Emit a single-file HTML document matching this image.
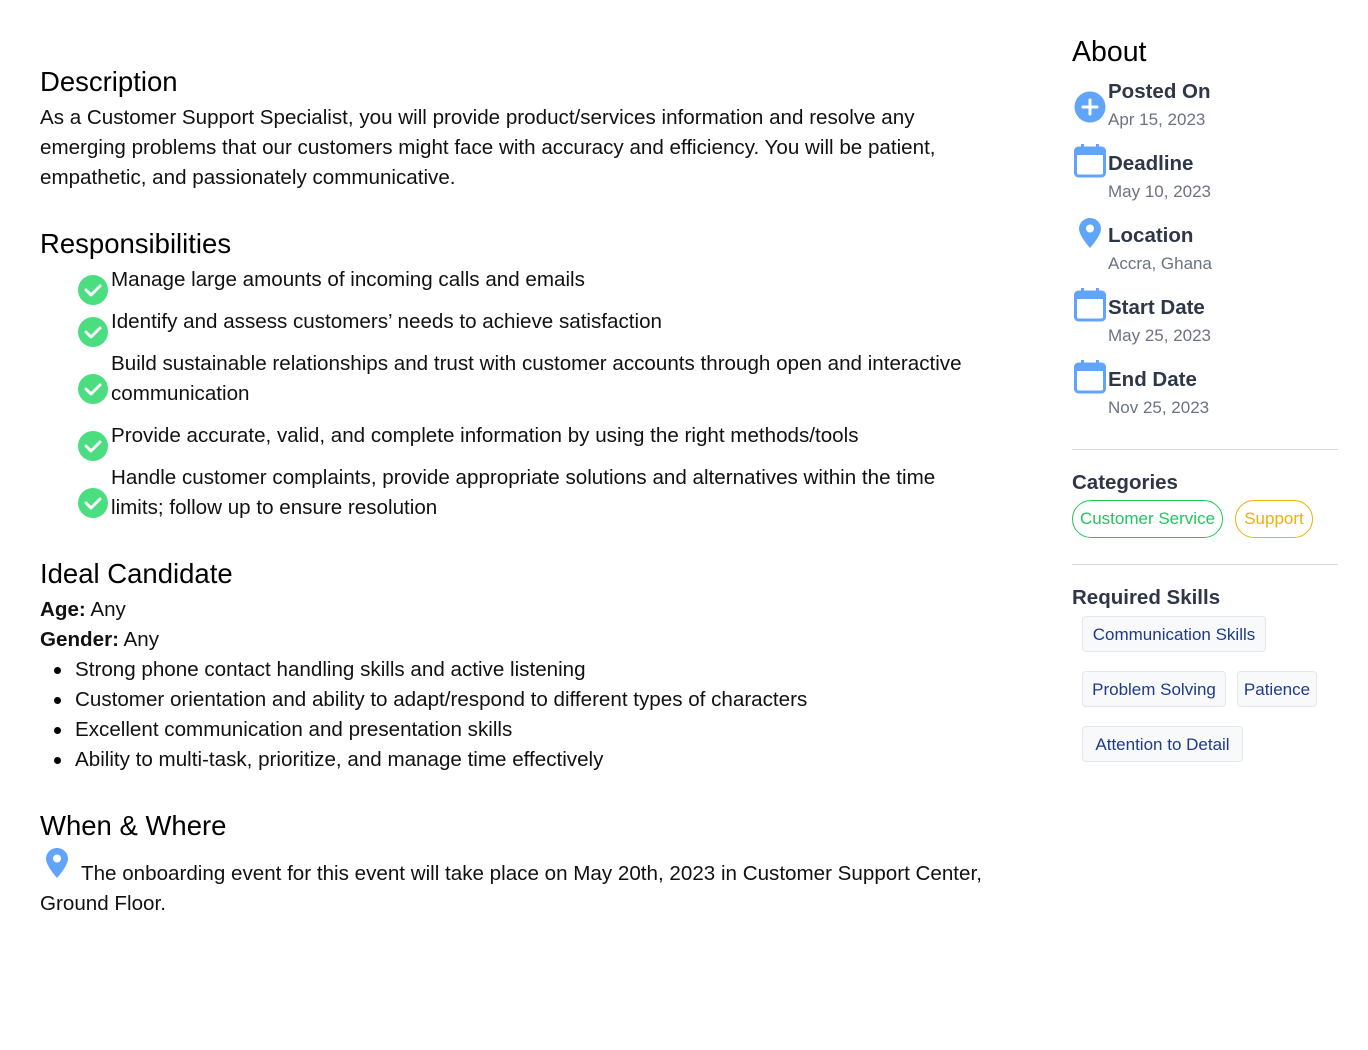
<!DOCTYPE html><html><head><style>
body{margin:0;background:#fff;font-family:"Liberation Sans",sans-serif;color:#111;}
.a{position:absolute;white-space:nowrap;}
.h{font-size:27.5px;line-height:32px;color:#000;}
.t{font-size:20.6px;line-height:30px;}
.rb{font-size:20.5px;font-weight:bold;color:#2d3748;line-height:26px;}
.rg{font-size:17px;color:#6b7280;line-height:24px;}
.chip{position:absolute;height:36px;border:1px solid #e5e7eb;background:#f8f9fb;border-radius:4px;color:#1e3a8a;font-size:17px;line-height:36px;text-align:center;box-sizing:border-box;}
.pill{position:absolute;height:38px;border-radius:19px;font-size:17px;line-height:35px;text-align:center;box-sizing:border-box;border:1.5px solid;}
</style></head><body>
<div class="a h" style="left:40px;top:66px">Description</div>
<div class="a t" style="left:40px;top:103px">As a Customer Support Specialist, you will provide product/services information and resolve any<br>emerging problems that our customers might face with accuracy and efficiency. You will be patient,<br>empathetic, and passionately communicative.</div>
<div class="a h" style="left:40px;top:228px">Responsibilities</div>
<svg class="a" style="left:78px;top:275px" width="30" height="30"><circle cx="15" cy="15" r="15" fill="#4ade80"/><path d="M8 15l5 5 9-9" stroke="#fff" stroke-width="3" fill="none" stroke-linecap="round" stroke-linejoin="round"/></svg>
<svg class="a" style="left:78px;top:317px" width="30" height="30"><circle cx="15" cy="15" r="15" fill="#4ade80"/><path d="M8 15l5 5 9-9" stroke="#fff" stroke-width="3" fill="none" stroke-linecap="round" stroke-linejoin="round"/></svg>
<svg class="a" style="left:78px;top:374px" width="30" height="30"><circle cx="15" cy="15" r="15" fill="#4ade80"/><path d="M8 15l5 5 9-9" stroke="#fff" stroke-width="3" fill="none" stroke-linecap="round" stroke-linejoin="round"/></svg>
<svg class="a" style="left:78px;top:431px" width="30" height="30"><circle cx="15" cy="15" r="15" fill="#4ade80"/><path d="M8 15l5 5 9-9" stroke="#fff" stroke-width="3" fill="none" stroke-linecap="round" stroke-linejoin="round"/></svg>
<svg class="a" style="left:78px;top:488px" width="30" height="30"><circle cx="15" cy="15" r="15" fill="#4ade80"/><path d="M8 15l5 5 9-9" stroke="#fff" stroke-width="3" fill="none" stroke-linecap="round" stroke-linejoin="round"/></svg>
<div class="a t" style="left:111px;top:265px">Manage large amounts of incoming calls and emails</div>
<div class="a t" style="left:111px;top:307px">Identify and assess customers’ needs to achieve satisfaction</div>
<div class="a t" style="left:111px;top:349px">Build sustainable relationships and trust with customer accounts through open and interactive<br>communication</div>
<div class="a t" style="left:111px;top:421px">Provide accurate, valid, and complete information by using the right methods/tools</div>
<div class="a t" style="left:111px;top:463px">Handle customer complaints, provide appropriate solutions and alternatives within the time<br>limits; follow up to ensure resolution</div>
<div class="a h" style="left:40px;top:558px">Ideal Candidate</div>
<div class="a t" style="left:40px;top:595px"><b>Age:</b> Any<br><b>Gender:</b> Any</div>
<div class="a t" style="left:75px;top:655px">Strong phone contact handling skills and active listening<br>Customer orientation and ability to adapt/respond to different types of characters<br>Excellent communication and presentation skills<br>Ability to multi-task, prioritize, and manage time effectively</div>
<div class="a" style="left:54px;top:667px;width:7px;height:7px;border-radius:50%;background:#000"></div>
<div class="a" style="left:54px;top:697px;width:7px;height:7px;border-radius:50%;background:#000"></div>
<div class="a" style="left:54px;top:727px;width:7px;height:7px;border-radius:50%;background:#000"></div>
<div class="a" style="left:54px;top:757px;width:7px;height:7px;border-radius:50%;background:#000"></div>
<div class="a h" style="left:40px;top:810px">When &amp; Where</div>
<svg class="a" style="left:46px;top:848px" width="22" height="30" viewBox="0 0 22 30"><path d="M11 0C5 0 0 4.8 0 10.8 0 18 11 30 11 30S22 18 22 10.8C22 4.8 17 0 11 0z" fill="#60a5fa"/><circle cx="11" cy="10.5" r="4" fill="#fff"/></svg>
<div class="a t" style="left:40px;top:859px"><span style="margin-left:41px"></span>The onboarding event for this event will take place on May 20th, 2023 in Customer Support Center,<br>Ground Floor.</div>

<div class="a" style="left:1072px;top:35px;font-size:28.5px;line-height:34px;color:#000">About</div>
<svg class="a" style="left:1074px;top:91px" width="32" height="32"><circle cx="16" cy="16" r="15.5" fill="#60a5fa"/><path d="M16 9v14M9 16h14" stroke="#fff" stroke-width="3" stroke-linecap="round"/></svg>
<div class="a rb" style="left:1108px;top:79px">Posted On</div><div class="a rg" style="left:1108px;top:108px">Apr 15, 2023</div>
<svg class="a" style="left:1074px;top:144px" width="32" height="34"><rect x="1.5" y="4" width="29" height="28" rx="3" fill="#fff" stroke="#60a5fa" stroke-width="3"/><rect x="1.5" y="4" width="29" height="7" fill="#60a5fa"/><rect x="7" y="0" width="3" height="6" fill="#60a5fa"/><rect x="22" y="0" width="3" height="6" fill="#60a5fa"/></svg>
<div class="a rb" style="left:1108px;top:151px">Deadline</div><div class="a rg" style="left:1108px;top:180px">May 10, 2023</div>
<svg class="a" style="left:1079px;top:218px" width="22" height="30" viewBox="0 0 22 30"><path d="M11 0C5 0 0 4.8 0 10.8 0 18 11 30 11 30S22 18 22 10.8C22 4.8 17 0 11 0z" fill="#60a5fa"/><circle cx="11" cy="10.5" r="4" fill="#fff"/></svg>
<div class="a rb" style="left:1108px;top:223px">Location</div><div class="a rg" style="left:1108px;top:252px">Accra, Ghana</div>
<svg class="a" style="left:1074px;top:288px" width="32" height="34"><rect x="1.5" y="4" width="29" height="28" rx="3" fill="#fff" stroke="#60a5fa" stroke-width="3"/><rect x="1.5" y="4" width="29" height="7" fill="#60a5fa"/><rect x="7" y="0" width="3" height="6" fill="#60a5fa"/><rect x="22" y="0" width="3" height="6" fill="#60a5fa"/></svg>
<div class="a rb" style="left:1108px;top:295px">Start Date</div><div class="a rg" style="left:1108px;top:324px">May 25, 2023</div>
<svg class="a" style="left:1074px;top:360px" width="32" height="34"><rect x="1.5" y="4" width="29" height="28" rx="3" fill="#fff" stroke="#60a5fa" stroke-width="3"/><rect x="1.5" y="4" width="29" height="7" fill="#60a5fa"/><rect x="7" y="0" width="3" height="6" fill="#60a5fa"/><rect x="22" y="0" width="3" height="6" fill="#60a5fa"/></svg>
<div class="a rb" style="left:1108px;top:367px">End Date</div><div class="a rg" style="left:1108px;top:396px">Nov 25, 2023</div>
<div class="a" style="left:1072px;top:449px;width:266px;height:1px;background:#d9d9e0"></div>
<div class="a rb" style="left:1072px;top:470px">Categories</div>
<div class="pill" style="left:1072px;top:500px;width:151px;border-color:#22c55e;color:#22c55e">Customer Service</div>
<div class="pill" style="left:1235px;top:500px;width:78px;border-color:#eab308;color:#eab308">Support</div>
<div class="a" style="left:1072px;top:564px;width:266px;height:1px;background:#d9d9e0"></div>
<div class="a rb" style="left:1072px;top:585px">Required Skills</div>
<div class="chip" style="left:1082px;top:616px;width:184px">Communication Skills</div>
<div class="chip" style="left:1082px;top:671px;width:144px">Problem Solving</div>
<div class="chip" style="left:1237px;top:671px;width:80px">Patience</div>
<div class="chip" style="left:1082px;top:726px;width:161px">Attention to Detail</div>
</body></html>
